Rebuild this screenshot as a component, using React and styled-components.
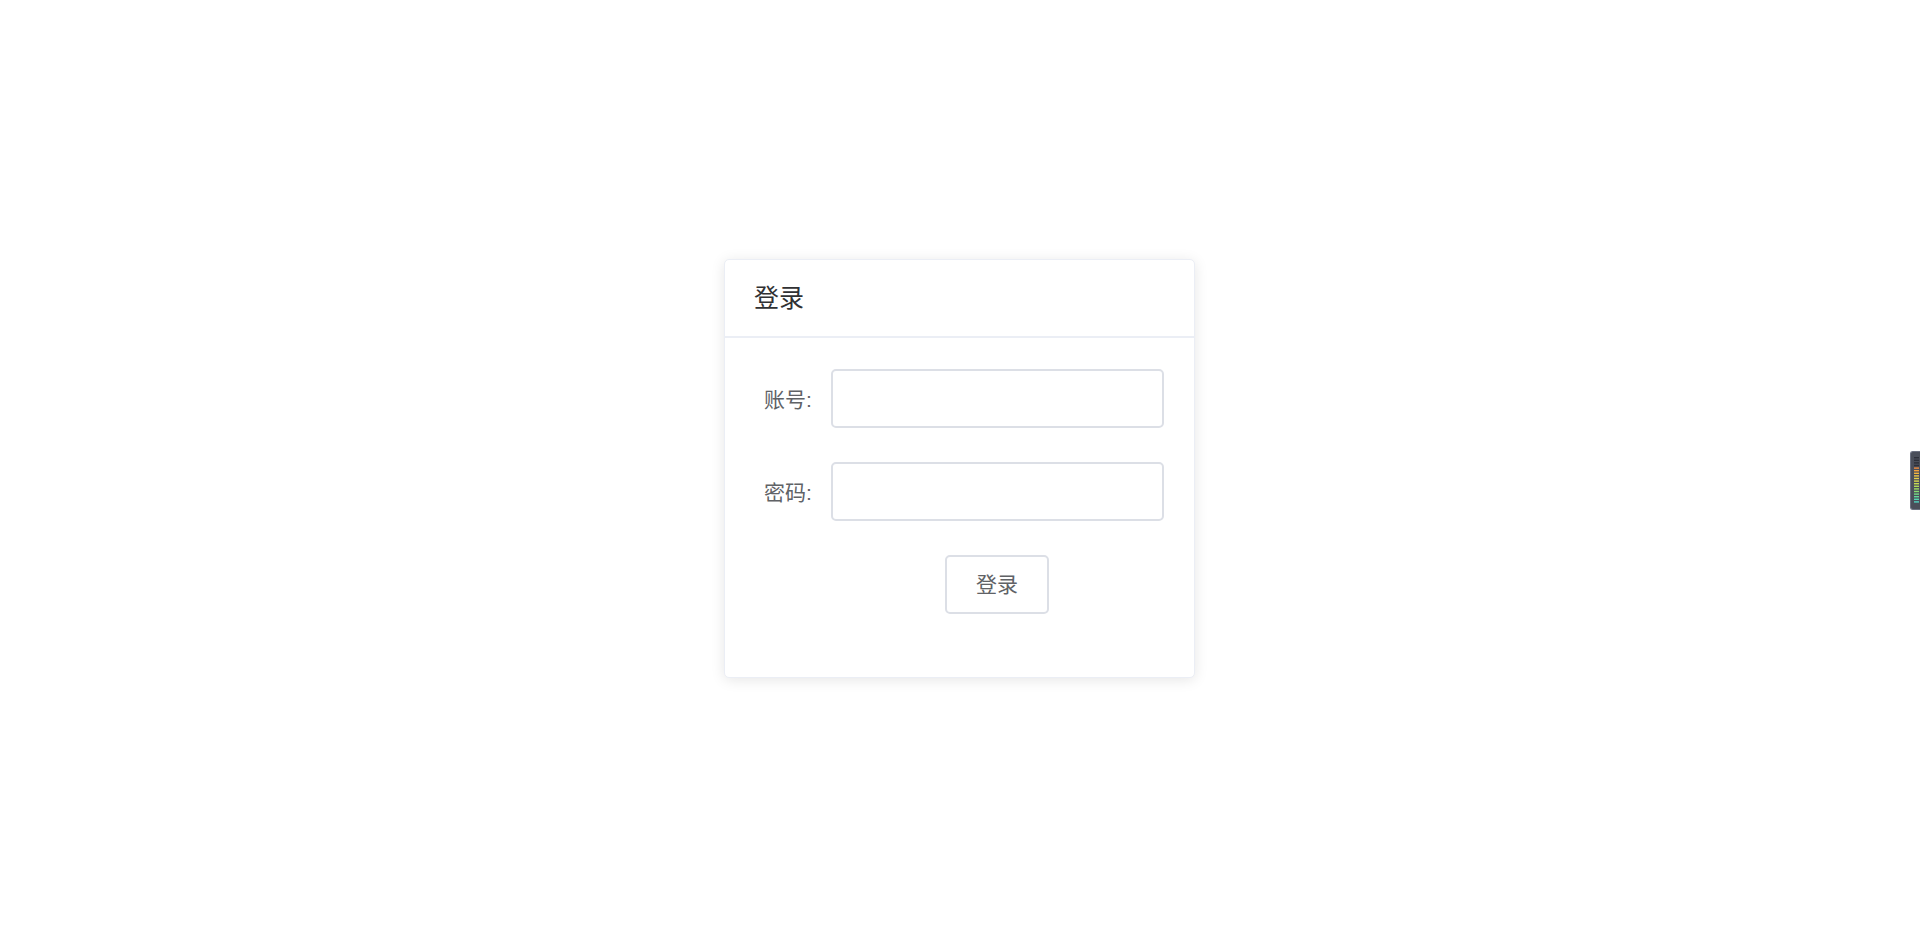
import React from 'react';
import styled, { createGlobalStyle } from 'styled-components';

const GlobalStyle = createGlobalStyle`
  html, body {
    margin: 0;
    padding: 0;
    background: #fff;
    font-family: "Liberation Sans", "Noto Sans CJK SC", sans-serif;
  }
`;

const Page = styled.div`
  height: 937px;
  display: flex;
  justify-content: center;
  padding-top: 259px;
  padding-right: 1px;
  box-sizing: border-box;
`;

const Card = styled.div`
  width: 471px;
  height: 419px;
  box-sizing: border-box;
  border: 1px solid #ebeef5;
  border-radius: 5px;
  background: #fff;
  box-shadow: 0 2px 14px 0 rgba(0, 0, 0, 0.1);
  display: flex;
  flex-direction: column;
`;

const Header = styled.div`
  height: 78px;
  box-sizing: border-box;
  padding: 0 29px 4px;
  display: flex;
  align-items: center;
  border-bottom: 2px solid #ebeef5;
  font-size: 25px;
  color: #303133;
`;

const Body = styled.div`
  padding: 31px 30px 30px 30px;
  display: flex;
  flex-direction: column;
  gap: 34px;
`;

const Row = styled.div`
  display: flex;
  align-items: center;
  height: 59px;
`;

const Label = styled.label`
  width: 76px;
  box-sizing: border-box;
  padding: 0 19px 2px 0;
  text-align: right;
  font-size: 21px;
  color: #606266;
`;

const Input = styled.input`
  width: 334px;
  height: 59px;
  box-sizing: border-box;
  border: 2px solid #dcdfe6;
  border-radius: 5px;
  outline: none;
  padding: 0 15px;
  font-size: 20px;
  color: #606266;
  background: #fff;
`;

const Button = styled.button`
  margin-left: ${({ $offset }) => $offset}px;
  width: 104px;
  height: 59px;
  box-sizing: border-box;
  border: 2px solid #dcdfe6;
  border-radius: 5px;
  background: #fff;
  padding: 0 0 4px;
  font-family: inherit;
  font-size: 21px;
  color: #606266;
  cursor: pointer;
`;

const SideWidget = styled.div`
  position: fixed;
  right: 0;
  top: 451px;
  width: 10px;
  height: 59px;
  background: #4a4e5a;
  border-radius: 3px 0 0 3px;
  border: 1px solid #6b7080;
  border-right: none;
  box-sizing: border-box;
`;

const barColors = [
  '#2d303a', '#2d303a', '#2d303a', '#2d303a',
  '#f08a3c', '#f2a23e', '#f3b640', '#efc845', '#e5d04a', '#d8d84e',
  '#c6da52', '#b2dc58', '#9ddd62', '#88dc72', '#74da85', '#64d89a',
  '#58d5ae', '#50d2bf',
];

const Meter = () => (
  <svg width="10" height="59" viewBox="0 0 10 59">
    {barColors.map((c, i) => (
      <rect key={i} x="3" y={5 + i * 2.6} width="5" height="1.4" fill={c} />
    ))}
  </svg>
);

export default function App() {
  return (
    <>
      <GlobalStyle />
      <Page>
        <Card>
          <Header>登录</Header>
          <Body>
            <Row>
              <Label>账号:</Label>
              <Input type="text" />
            </Row>
            <Row>
              <Label>密码:</Label>
              <Input type="password" />
            </Row>
            <Row>
              <Button $offset={190}>登录</Button>
            </Row>
          </Body>
        </Card>
      </Page>
      <SideWidget>
        <Meter />
      </SideWidget>
    </>
  );
}
